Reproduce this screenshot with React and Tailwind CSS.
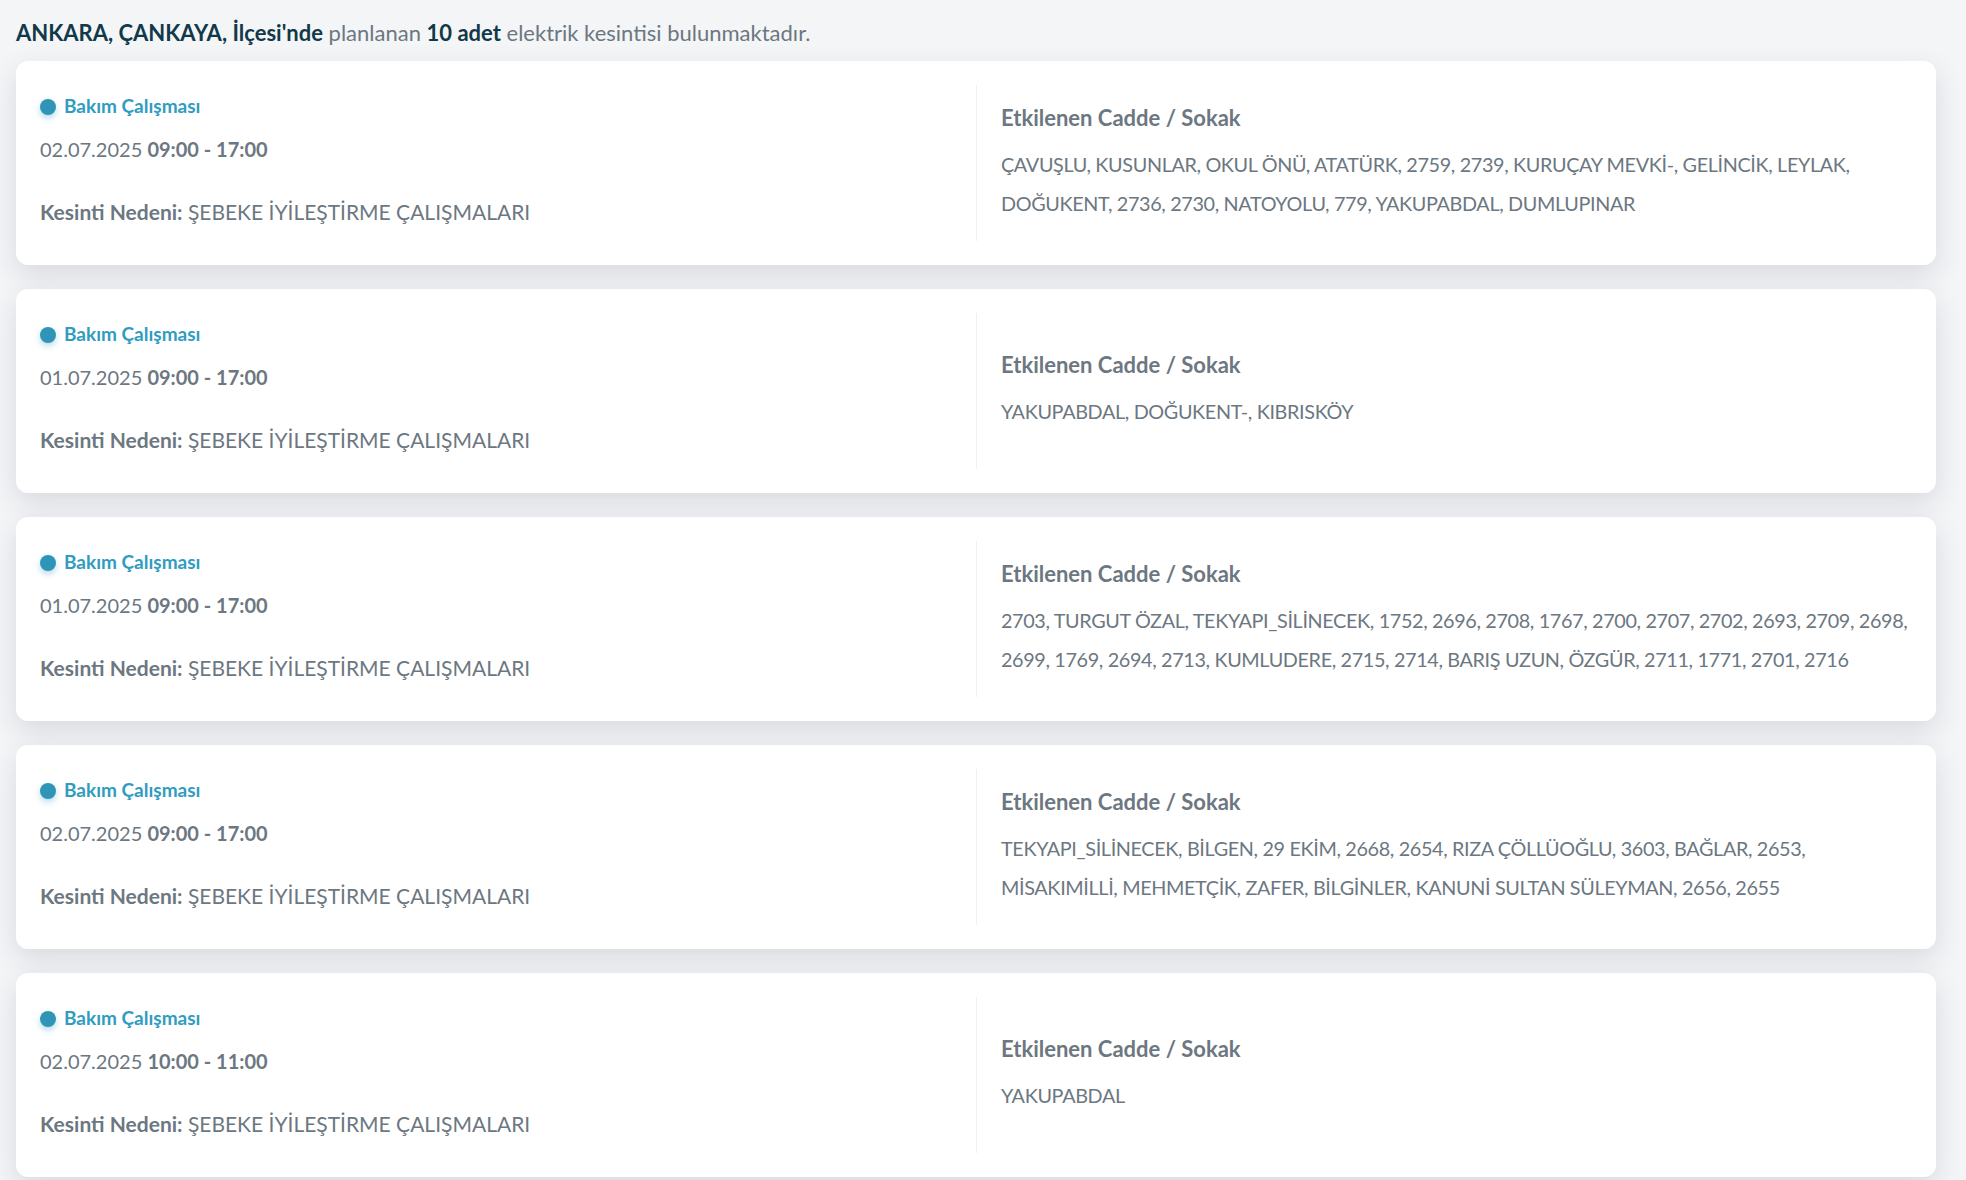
import React from 'react'

const outages = [
    {
        date: '02.07.2025',
        time: '09:00 - 17:00',
        streets: 'ÇAVUŞLU, KUSUNLAR, OKUL ÖNÜ, ATATÜRK, 2759, 2739, KURUÇAY MEVKİ-, GELİNCİK, LEYLAK, DOĞUKENT, 2736, 2730, NATOYOLU, 779, YAKUPABDAL, DUMLUPINAR',
    },
    {
        date: '01.07.2025',
        time: '09:00 - 17:00',
        streets: 'YAKUPABDAL, DOĞUKENT-, KIBRISKÖY',
    },
    {
        date: '01.07.2025',
        time: '09:00 - 17:00',
        streets: '2703, TURGUT ÖZAL, TEKYAPI_SİLİNECEK, 1752, 2696, 2708, 1767, 2700, 2707, 2702, 2693, 2709, 2698, 2699, 1769, 2694, 2713, KUMLUDERE, 2715, 2714, BARIŞ UZUN, ÖZGÜR, 2711, 1771, 2701, 2716',
    },
    {
        date: '02.07.2025',
        time: '09:00 - 17:00',
        streets: 'TEKYAPI_SİLİNECEK, BİLGEN, 29 EKİM, 2668, 2654, RIZA ÇÖLLÜOĞLU, 3603, BAĞLAR, 2653, MİSAKIMİLLİ, MEHMETÇİK, ZAFER, BİLGİNLER, KANUNİ SULTAN SÜLEYMAN, 2656, 2655',
    },
    {
        date: '02.07.2025',
        time: '10:00 - 11:00',
        streets: 'YAKUPABDAL',
    },
]

function OutageCard({ item }) {
    return (
        <div className="w-[1920px] h-[204px] bg-white rounded-xl shadow-[0_10px_28px_rgba(30,40,60,0.13)] p-6 grid grid-cols-2">
            {/* Left: type, date, reason */}
            <div className="flex flex-col justify-center pr-6 pb-[6px]">
                <div className="flex items-center gap-2 h-[24px]">
                    <span className="w-4 h-4 rounded-full bg-[#2f95b8] shadow-[0_3px_6px_rgba(42,152,189,0.35)]"></span>
                    <span className="text-[19px] font-bold text-[#2f9cc0]">Bakım Çalışması</span>
                </div>
                <div className="mt-[16px] text-[20px] leading-[28px] text-[#6c7781]">
                    {item.date} <span className="font-bold">{item.time}</span>
                </div>
                <div className="mt-[35px] text-[21px] leading-[28px] text-[#6c7781]">
                    <span className="font-bold">Kesinti Nedeni:</span> ŞEBEKE İYİLEŞTİRME ÇALIŞMALARI
                </div>
            </div>

            {/* Right: streets */}
            <div className="flex flex-col justify-center border-l border-[#eef0f2] pl-6">
                <div className="text-[22px] leading-[28px] font-bold text-[#6c7781]">Etkilenen Cadde / Sokak</div>
                <div className="mt-[13px] text-[19.8px] leading-[39px] tracking-[-0.35px] text-[#6c7781]">{item.streets}</div>
            </div>
        </div>
    )
}

function App() {
    return (
        <div className="min-h-screen bg-[#f4f5f7] px-4 pt-[19px] pb-10 font-['Lato',sans-serif]">
            <p className="text-[22px] leading-[28px] text-[#6c7781] mb-[14px]">
                <span className="font-bold text-[#11394a]">ANKARA, ÇANKAYA, İlçesi'nde</span> planlanan{' '}
                <span className="font-bold text-[#11394a]">10 adet</span> elektrik kesintisi bulunmaktadır.
            </p>
            <div className="flex flex-col gap-6">
                {outages.map((item, i) => (
                    <OutageCard key={i} item={item} />
                ))}
            </div>
        </div>
    )
}

export default App
